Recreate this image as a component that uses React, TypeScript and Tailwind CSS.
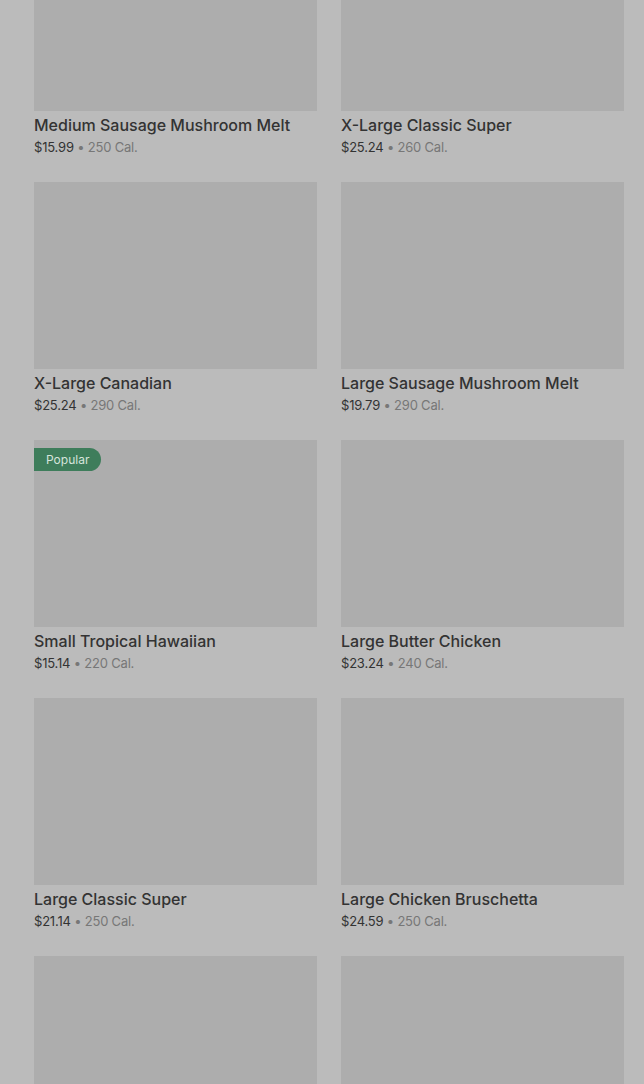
type Item = { name?: string; price?: string; cal?: string; popular?: boolean };

const items: Item[] = [
  { name: "Medium Sausage Mushroom Melt", price: "$15.99", cal: "250 Cal." },
  { name: "X-Large Classic Super", price: "$25.24", cal: "260 Cal." },
  { name: "X-Large Canadian", price: "$25.24", cal: "290 Cal." },
  { name: "Large Sausage Mushroom Melt", price: "$19.79", cal: "290 Cal." },
  { name: "Small Tropical Hawaiian", price: "$15.14", cal: "220 Cal.", popular: true },
  { name: "Large Butter Chicken", price: "$23.24", cal: "240 Cal." },
  { name: "Large Classic Super", price: "$21.14", cal: "250 Cal." },
  { name: "Large Chicken Bruschetta", price: "$24.59", cal: "250 Cal." },
  {},
  {},
];

export default function App() {
  return (
    <div
      className="h-[1084px] overflow-hidden bg-[#bbbbbb]"
      style={{ fontFamily: "Inter, 'Noto Sans', sans-serif" }}
    >
      <div className="grid grid-cols-2 gap-x-6 gap-y-[23px] pl-[34px] pr-5 -mt-[76px]">
        {items.map((item, idx) => (
          <div key={idx} className="flex flex-col">
            <div className="relative h-[187px] bg-[#adadad]">
              {item.popular && (
                <div className="absolute top-2 left-0 h-[23px] px-3 flex items-center rounded-r-full bg-[#3e7d5b] text-[12px] text-[#d6e4dc]">
                  Popular
                </div>
              )}
            </div>
            {item.name && (
              <>
                <div className="mt-1 text-[16px] leading-5 font-medium text-[#333333]">{item.name}</div>
                <div className="text-[13px] leading-6 tracking-[-0.2px]">
                  <span className="text-[#333333]">{item.price}</span>
                  <span className="text-[#777777]"> • {item.cal}</span>
                </div>
              </>
            )}
          </div>
        ))}
      </div>
    </div>
  );
}
